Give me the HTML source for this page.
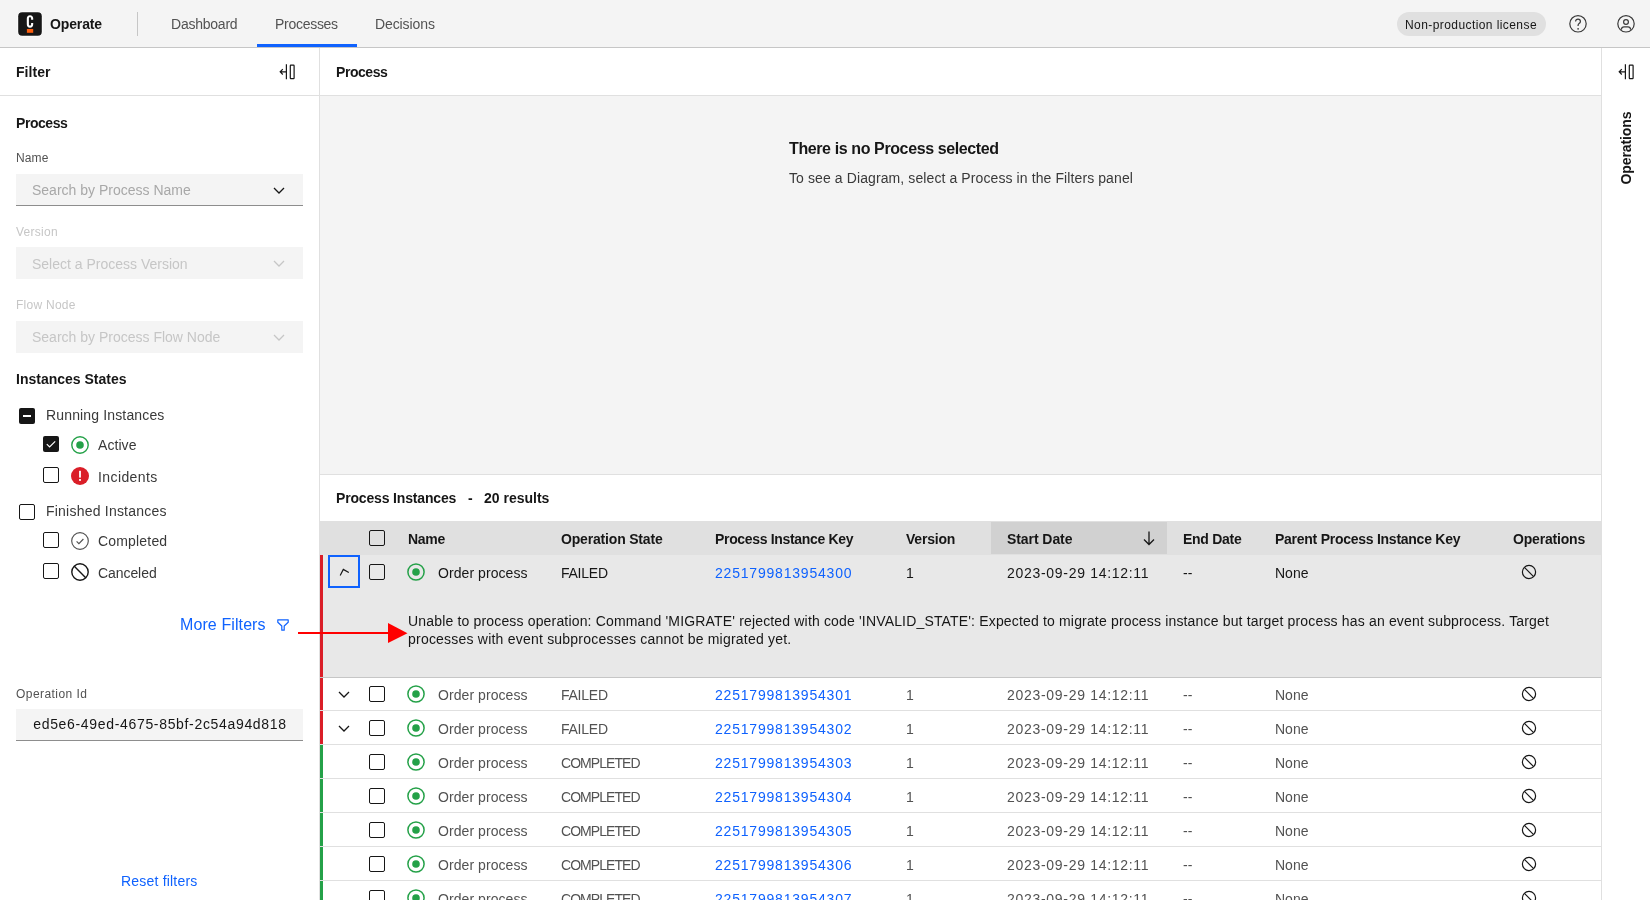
<!DOCTYPE html>
<html><head><meta charset="utf-8">
<style>
*{box-sizing:border-box;margin:0;padding:0}
html,body{width:1650px;height:900px;overflow:hidden;background:#fff;font-family:"Liberation Sans",sans-serif;color:#161616}
.a{position:absolute}
.t{position:absolute;white-space:nowrap;line-height:14px;font-size:14px;will-change:transform}
.s12{font-size:12px;line-height:12px}
.s16{font-size:16px;line-height:16px}
.b{font-weight:bold}
svg{position:absolute;overflow:visible}
</style></head><body>
<!-- HEADER -->
<div class="a" style="left:0;top:0;width:1650px;height:47px;background:#f4f4f4"></div>
<div class="a" style="left:0;top:47px;width:1650px;height:1px;background:#c6c6c6"></div>
<svg style="left:17px;top:11px" width="26" height="26" viewBox="0 0 26 26">
 <rect x="0.5" y="0.5" width="25" height="25" rx="5" fill="#fff"/>
 <rect x="1.2" y="1.2" width="23.6" height="23.6" rx="4" fill="#171717"/>
 <path d="M13 4.2c-2.1 0-3.2 1.3-3.2 3.4v5.7c0 2.1 1.1 3.4 3.2 3.4s3.2-1.3 3.2-3.4v-1.2h-2.1v1.2c0 .9-.3 1.3-1.1 1.3s-1.1-.4-1.1-1.3V7.6c0-.9.3-1.3 1.1-1.3s1.1.4 1.1 1.3v1.2h2.1V7.6c0-2.1-1.1-3.4-3.2-3.4z" fill="#fff"/>
 <rect x="9.9" y="18" width="6.3" height="3.8" fill="#fc5d0d"/>
</svg>
<div class="t b" style="left:50px;top:17px;color:#161616;letter-spacing:-0.13px">Operate</div>
<div class="a" style="left:137px;top:12px;width:1px;height:24px;background:#c6c6c6"></div>
<div class="t" style="left:171px;top:17px;color:#525252;letter-spacing:-0.23px">Dashboard</div>
<div class="t" style="left:275px;top:17px;color:#525252;letter-spacing:-0.28px">Processes</div>
<div class="t" style="left:375px;top:17px;color:#525252;letter-spacing:-0.1px">Decisions</div>
<div class="a" style="left:257px;top:44px;width:100px;height:3px;background:#0f62fe"></div>
<div class="a" style="left:1397px;top:12px;width:149px;height:24px;border-radius:12px;background:#e0e0e0"></div>
<div class="t s12" style="left:1405px;top:19px;color:#161616;letter-spacing:0.42px">Non-production license</div>
<svg style="left:1568px;top:14px" width="20" height="20" viewBox="0 0 20 20">
 <circle cx="10" cy="9.8" r="8.2" fill="none" stroke="#393939" stroke-width="1.2"/>
 <path d="M7.6 7.6c0-1.5 1-2.5 2.4-2.5s2.4 1 2.4 2.3c0 1.1-.6 1.6-1.3 2.1-.7.5-1 .9-1 1.8v.6" fill="none" stroke="#393939" stroke-width="1.2"/>
 <circle cx="10.1" cy="14.8" r="0.85" fill="#393939"/>
</svg>
<svg style="left:1616px;top:14px" width="20" height="20" viewBox="0 0 20 20">
 <circle cx="10" cy="9.8" r="8.2" fill="none" stroke="#393939" stroke-width="1.2"/>
 <circle cx="10" cy="8" r="2.4" fill="none" stroke="#393939" stroke-width="1.2"/>
 <path d="M5.3 15.6C5.6 13.7 6.4 12.9 8 12.9H12C13.6 12.9 14.4 13.7 14.7 15.6" fill="none" stroke="#393939" stroke-width="1.2"/>
</svg>

<!-- LEFT PANEL -->
<div class="a" style="left:319px;top:48px;width:1px;height:852px;background:#e0e0e0"></div>
<div class="a" style="left:0;top:95px;width:319px;height:1px;background:#e0e0e0"></div>
<div class="t b" style="left:16px;top:65px;letter-spacing:0.06px">Filter</div>
<svg style="left:279px;top:64px" width="17" height="16" viewBox="0 0 17 16">
 <path d="M1.2 7.8H7.4M3.8 5.1L1.2 7.8 3.8 10.5" fill="none" stroke="#161616" stroke-width="1.2"/>
 <path d="M7.4 0.3V15.3" stroke="#161616" stroke-width="1.2"/>
 <rect x="11.3" y="1.1" width="3.8" height="13.5" rx=".6" fill="none" stroke="#161616" stroke-width="1.2"/>
</svg>
<div class="t b" style="left:16px;top:116px;letter-spacing:-0.45px">Process</div>
<div class="t s12" style="left:16px;top:152px;color:#525252;letter-spacing:0.1px">Name</div>
<div class="a" style="left:16px;top:174px;width:287px;height:32px;background:#f4f4f4;border-bottom:1px solid #8d8d8d"></div>
<div class="t" style="left:32px;top:183px;color:#a8a8a8">Search by Process Name</div>
<svg style="left:271px;top:182px" width="16" height="16" viewBox="0 0 16 16"><path d="M3 6l5 5 5-5" fill="none" stroke="#161616" stroke-width="1.3"/></svg>
<div class="t s12" style="left:16px;top:226px;color:#c6c6c6;letter-spacing:0.27px">Version</div>
<div class="a" style="left:16px;top:247px;width:287px;height:32px;background:#f4f4f4"></div>
<div class="t" style="left:32px;top:257px;color:#c6c6c6">Select a Process Version</div>
<svg style="left:271px;top:255px" width="16" height="16" viewBox="0 0 16 16"><path d="M3 6l5 5 5-5" fill="none" stroke="#c6c6c6" stroke-width="1.3"/></svg>
<div class="t s12" style="left:16px;top:299px;color:#c6c6c6;letter-spacing:0.26px">Flow Node</div>
<div class="a" style="left:16px;top:321px;width:287px;height:32px;background:#f4f4f4"></div>
<div class="t" style="left:32px;top:330px;color:#c6c6c6">Search by Process Flow Node</div>
<svg style="left:271px;top:329px" width="16" height="16" viewBox="0 0 16 16"><path d="M3 6l5 5 5-5" fill="none" stroke="#c6c6c6" stroke-width="1.3"/></svg>

<div class="t b" style="left:16px;top:372px">Instances States</div>
<!-- checkboxes -->
<div class="a" style="left:19px;top:408px;width:16px;height:16px;border-radius:2px;background:#161616"></div>
<div class="a" style="left:23px;top:415px;width:8px;height:2px;background:#fff"></div>
<div class="t" style="left:46px;top:408px;color:#393939;letter-spacing:0.15px">Running Instances</div>

<div class="a" style="left:43px;top:436px;width:16px;height:16px;border-radius:2px;background:#161616"></div>
<svg style="left:43px;top:436px" width="16" height="16" viewBox="0 0 16 16"><path d="M3.8 8.2l2.8 2.8 5.6-5.6" fill="none" stroke="#fff" stroke-width="1.2"/></svg>
<svg style="left:71px;top:436px" width="18" height="18" viewBox="0 0 18 18"><circle cx="9" cy="9" r="8.2" fill="none" stroke="#24a148" stroke-width="1.4"/><circle cx="9" cy="9" r="3.8" fill="#24a148"/></svg>
<div class="t" style="left:98px;top:438px;color:#393939;letter-spacing:0.06px">Active</div>

<div class="a" style="left:43px;top:467px;width:16px;height:16px;border-radius:2px;border:1px solid #161616"></div>
<svg style="left:71px;top:467px" width="18" height="18" viewBox="0 0 18 18"><circle cx="9" cy="9" r="9" fill="#da1e28"/><rect x="8.1" y="3.8" width="1.8" height="6.8" fill="#fff"/><rect x="8.1" y="12" width="1.8" height="1.9" fill="#fff"/></svg>
<div class="t" style="left:98px;top:470px;color:#393939;letter-spacing:0.4px">Incidents</div>

<div class="a" style="left:19px;top:504px;width:16px;height:16px;border-radius:2px;border:1px solid #161616"></div>
<div class="t" style="left:46px;top:504px;color:#393939;letter-spacing:0.22px">Finished Instances</div>

<div class="a" style="left:43px;top:532px;width:16px;height:16px;border-radius:2px;border:1px solid #161616"></div>
<svg style="left:71px;top:532px" width="18" height="18" viewBox="0 0 18 18"><circle cx="9" cy="9" r="8.3" fill="none" stroke="#525252" stroke-width="1.15"/><path d="M5.6 9.3l2.3 2.3 4.5-4.6" fill="none" stroke="#525252" stroke-width="1.15"/></svg>
<div class="t" style="left:98px;top:534px;color:#393939;letter-spacing:0.18px">Completed</div>

<div class="a" style="left:43px;top:563px;width:16px;height:16px;border-radius:2px;border:1px solid #161616"></div>
<svg style="left:71px;top:563px" width="18" height="18" viewBox="0 0 18 18"><circle cx="9" cy="9" r="8.2" fill="none" stroke="#161616" stroke-width="1.4"/><path d="M3.3 3.3l11.4 11.4" stroke="#161616" stroke-width="1.4"/></svg>
<div class="t" style="left:98px;top:566px;color:#393939;letter-spacing:-0.07px">Canceled</div>

<div class="t s16" style="left:180px;top:617px;color:#0f62fe;letter-spacing:0.1px">More Filters</div>
<svg style="left:275px;top:617px" width="16" height="16" viewBox="0 0 16 16"><path d="M2.8 2.8H13.2V5.2L9.2 9V13.2H6.8V9L2.8 5.2Z" fill="none" stroke="#0f62fe" stroke-width="1.2" stroke-linejoin="round"/></svg>

<div class="t s12" style="left:16px;top:688px;color:#525252;letter-spacing:0.44px">Operation Id</div>
<div class="a" style="left:16px;top:709px;width:287px;height:32px;background:#f4f4f4;border-bottom:1px solid #8d8d8d;overflow:hidden">
 <div class="t" style="right:16px;top:8px;color:#161616;letter-spacing:0.67px">-b9ed5e6-49ed-4675-85bf-2c54a94d818</div>
 <div class="a" style="left:0;top:0;width:16px;height:31px;background:#f4f4f4"></div>
</div>
<div class="t" style="left:121px;top:874px;color:#0f62fe;letter-spacing:0.2px">Reset filters</div>

<!-- MAIN -->
<div class="t b" style="left:336px;top:65px;letter-spacing:-0.45px">Process</div>
<div class="a" style="left:320px;top:95px;width:1281px;height:1px;background:#e0e0e0"></div>
<div class="a" style="left:320px;top:96px;width:1281px;height:378px;background:#f4f4f4"></div>
<div class="a" style="left:320px;top:474px;width:1281px;height:1px;background:#e0e0e0"></div>
<div class="t s16 b" style="left:789px;top:141px;letter-spacing:-0.39px">There is no Process selected</div>
<div class="t" style="left:789px;top:171px;color:#393939;letter-spacing:0.1px">To see a Diagram, select a Process in the Filters panel</div>

<!-- RIGHT PANEL -->
<div class="a" style="left:1601px;top:48px;width:1px;height:852px;background:#e0e0e0"></div>
<svg style="left:1618px;top:64px" width="17" height="16" viewBox="0 0 17 16">
 <path d="M1.2 7.8H7.4M3.8 5.1L1.2 7.8 3.8 10.5" fill="none" stroke="#161616" stroke-width="1.2"/>
 <path d="M7.4 0.3V15.3" stroke="#161616" stroke-width="1.2"/>
 <rect x="11.3" y="1.1" width="3.8" height="13.5" rx=".6" fill="none" stroke="#161616" stroke-width="1.2"/>
</svg>
<div class="t b" style="left:1582px;top:141px;width:88px;text-align:center;transform:rotate(-90deg);letter-spacing:-0.1px">Operations</div>

<!-- TABLE -->
<div class="t b" style="left:336px;top:491px;letter-spacing:-0.16px">Process Instances</div>
<div class="t b" style="left:468px;top:491px">-</div>
<div class="t b" style="left:484px;top:491px">20 results</div>
<div class="a" style="left:320px;top:521px;width:1281px;height:34px;background:#e0e0e0"></div>
<div class="a" style="left:991px;top:522px;width:176px;height:32px;background:#d1d1d1"></div>
<div class="a" style="left:369px;top:530px;width:16px;height:16px;border-radius:2px;border:1px solid #161616"></div>
<div class="t b" style="left:408px;top:532px;letter-spacing:-0.28px">Name</div>
<div class="t b" style="left:561px;top:532px;letter-spacing:-0.18px">Operation State</div>
<div class="t b" style="left:715px;top:532px;letter-spacing:-0.33px">Process Instance Key</div>
<div class="t b" style="left:906px;top:532px;letter-spacing:-0.2px">Version</div>
<div class="t b" style="left:1007px;top:532px;letter-spacing:-0.07px">Start Date</div>
<div class="t b" style="left:1183px;top:532px;letter-spacing:-0.27px">End Date</div>
<div class="t b" style="left:1275px;top:532px;letter-spacing:-0.26px">Parent Process Instance Key</div>
<div class="t b" style="left:1513px;top:532px;letter-spacing:-0.19px">Operations</div>
<svg style="left:1141px;top:530px" width="16" height="16" viewBox="0 0 16 16"><path d="M8 1.5v13M3 9.5l5 5 5-5" fill="none" stroke="#161616" stroke-width="1.3"/></svg>
<div class="a" style="left:320px;top:555px;width:1281px;height:122px;background:#e8e8e8"></div>
<div class="a" style="left:320px;top:555px;width:3px;height:122px;background:#da1e28"></div>
<div class="a" style="left:328px;top:555px;width:32px;height:33px;border:2px solid #0f62fe"></div>
<svg style="left:336px;top:564px" width="16" height="16" viewBox="0 0 16 16"><path d="M4.2 11.4L7.3 5.4 12.8 8.6" fill="none" stroke="#161616" stroke-width="1.15"/></svg>
<div class="a" style="left:369px;top:564px;width:16px;height:16px;border-radius:2px;border:1px solid #161616"></div>
<svg style="left:407px;top:563px" width="18" height="18" viewBox="0 0 18 18"><circle cx="9" cy="9" r="8.1" fill="none" stroke="#24a148" stroke-width="1.5"/><circle cx="9" cy="9" r="3.8" fill="#24a148"/></svg>
<div class="t" style="left:438px;top:566px;color:#161616;letter-spacing:0.07px">Order process</div>
<div class="t" style="left:561px;top:566px;color:#161616;letter-spacing:-0.25px">FAILED</div>
<div class="t" style="left:715px;top:566px;color:#0f62fe;letter-spacing:0.8px">2251799813954300</div>
<div class="t" style="left:906px;top:566px;color:#161616">1</div>
<div class="t" style="left:1007px;top:566px;color:#161616;letter-spacing:0.7px">2023-09-29 14:12:11</div>
<div class="t" style="left:1183px;top:566px;color:#161616">--</div>
<div class="t" style="left:1275px;top:566px;color:#161616">None</div>
<svg style="left:1521px;top:564px" width="16" height="16" viewBox="0 0 16 16"><circle cx="8" cy="8" r="6.6" fill="none" stroke="#161616" stroke-width="1.2"/><path d="M3.4 3.4l9.2 9.2" stroke="#161616" stroke-width="1.2"/></svg>
<div class="t" style="left:408px;top:614px;color:#161616;letter-spacing:0.166px">Unable to process operation: Command 'MIGRATE' rejected with code 'INVALID_STATE': Expected to migrate process instance but target process has an event subprocess. Target</div>
<div class="t" style="left:408px;top:632px;color:#161616;letter-spacing:0.215px">processes with event subprocesses cannot be migrated yet.</div>
<div class="a" style="left:320px;top:677px;width:1281px;height:1px;background:#c6c6c6"></div>
<div class="a" style="left:320px;top:678px;width:3px;height:32px;background:#da1e28"></div>
<svg style="left:336px;top:686px" width="16" height="16" viewBox="0 0 16 16"><path d="M3 6l5 5 5-5" fill="none" stroke="#161616" stroke-width="1.3"/></svg>
<div class="a" style="left:369px;top:686px;width:16px;height:16px;border-radius:2px;border:1px solid #161616"></div>
<svg style="left:407px;top:685px" width="18" height="18" viewBox="0 0 18 18"><circle cx="9" cy="9" r="8.1" fill="none" stroke="#24a148" stroke-width="1.5"/><circle cx="9" cy="9" r="3.8" fill="#24a148"/></svg>
<div class="t" style="left:438px;top:688px;color:#525252;letter-spacing:0.07px">Order process</div>
<div class="t" style="left:561px;top:688px;color:#525252;letter-spacing:-0.25px">FAILED</div>
<div class="t" style="left:715px;top:688px;color:#0f62fe;letter-spacing:0.8px">2251799813954301</div>
<div class="t" style="left:906px;top:688px;color:#525252">1</div>
<div class="t" style="left:1007px;top:688px;color:#525252;letter-spacing:0.7px">2023-09-29 14:12:11</div>
<div class="t" style="left:1183px;top:688px;color:#525252">--</div>
<div class="t" style="left:1275px;top:688px;color:#525252">None</div>
<svg style="left:1521px;top:686px" width="16" height="16" viewBox="0 0 16 16"><circle cx="8" cy="8" r="6.6" fill="none" stroke="#161616" stroke-width="1.2"/><path d="M3.4 3.4l9.2 9.2" stroke="#161616" stroke-width="1.2"/></svg>
<div class="a" style="left:320px;top:710px;width:1281px;height:1px;background:#e0e0e0"></div>
<div class="a" style="left:320px;top:711px;width:3px;height:33px;background:#da1e28"></div>
<svg style="left:336px;top:720px" width="16" height="16" viewBox="0 0 16 16"><path d="M3 6l5 5 5-5" fill="none" stroke="#161616" stroke-width="1.3"/></svg>
<div class="a" style="left:369px;top:720px;width:16px;height:16px;border-radius:2px;border:1px solid #161616"></div>
<svg style="left:407px;top:719px" width="18" height="18" viewBox="0 0 18 18"><circle cx="9" cy="9" r="8.1" fill="none" stroke="#24a148" stroke-width="1.5"/><circle cx="9" cy="9" r="3.8" fill="#24a148"/></svg>
<div class="t" style="left:438px;top:722px;color:#525252;letter-spacing:0.07px">Order process</div>
<div class="t" style="left:561px;top:722px;color:#525252;letter-spacing:-0.25px">FAILED</div>
<div class="t" style="left:715px;top:722px;color:#0f62fe;letter-spacing:0.8px">2251799813954302</div>
<div class="t" style="left:906px;top:722px;color:#525252">1</div>
<div class="t" style="left:1007px;top:722px;color:#525252;letter-spacing:0.7px">2023-09-29 14:12:11</div>
<div class="t" style="left:1183px;top:722px;color:#525252">--</div>
<div class="t" style="left:1275px;top:722px;color:#525252">None</div>
<svg style="left:1521px;top:720px" width="16" height="16" viewBox="0 0 16 16"><circle cx="8" cy="8" r="6.6" fill="none" stroke="#161616" stroke-width="1.2"/><path d="M3.4 3.4l9.2 9.2" stroke="#161616" stroke-width="1.2"/></svg>
<div class="a" style="left:320px;top:744px;width:1281px;height:1px;background:#e0e0e0"></div>
<div class="a" style="left:320px;top:745px;width:3px;height:33px;background:#24a148"></div>
<div class="a" style="left:369px;top:754px;width:16px;height:16px;border-radius:2px;border:1px solid #161616"></div>
<svg style="left:407px;top:753px" width="18" height="18" viewBox="0 0 18 18"><circle cx="9" cy="9" r="8.1" fill="none" stroke="#24a148" stroke-width="1.5"/><circle cx="9" cy="9" r="3.8" fill="#24a148"/></svg>
<div class="t" style="left:438px;top:756px;color:#525252;letter-spacing:0.07px">Order process</div>
<div class="t" style="left:561px;top:756px;color:#525252;letter-spacing:-0.95px">COMPLETED</div>
<div class="t" style="left:715px;top:756px;color:#0f62fe;letter-spacing:0.8px">2251799813954303</div>
<div class="t" style="left:906px;top:756px;color:#525252">1</div>
<div class="t" style="left:1007px;top:756px;color:#525252;letter-spacing:0.7px">2023-09-29 14:12:11</div>
<div class="t" style="left:1183px;top:756px;color:#525252">--</div>
<div class="t" style="left:1275px;top:756px;color:#525252">None</div>
<svg style="left:1521px;top:754px" width="16" height="16" viewBox="0 0 16 16"><circle cx="8" cy="8" r="6.6" fill="none" stroke="#161616" stroke-width="1.2"/><path d="M3.4 3.4l9.2 9.2" stroke="#161616" stroke-width="1.2"/></svg>
<div class="a" style="left:320px;top:778px;width:1281px;height:1px;background:#e0e0e0"></div>
<div class="a" style="left:320px;top:779px;width:3px;height:33px;background:#24a148"></div>
<div class="a" style="left:369px;top:788px;width:16px;height:16px;border-radius:2px;border:1px solid #161616"></div>
<svg style="left:407px;top:787px" width="18" height="18" viewBox="0 0 18 18"><circle cx="9" cy="9" r="8.1" fill="none" stroke="#24a148" stroke-width="1.5"/><circle cx="9" cy="9" r="3.8" fill="#24a148"/></svg>
<div class="t" style="left:438px;top:790px;color:#525252;letter-spacing:0.07px">Order process</div>
<div class="t" style="left:561px;top:790px;color:#525252;letter-spacing:-0.95px">COMPLETED</div>
<div class="t" style="left:715px;top:790px;color:#0f62fe;letter-spacing:0.8px">2251799813954304</div>
<div class="t" style="left:906px;top:790px;color:#525252">1</div>
<div class="t" style="left:1007px;top:790px;color:#525252;letter-spacing:0.7px">2023-09-29 14:12:11</div>
<div class="t" style="left:1183px;top:790px;color:#525252">--</div>
<div class="t" style="left:1275px;top:790px;color:#525252">None</div>
<svg style="left:1521px;top:788px" width="16" height="16" viewBox="0 0 16 16"><circle cx="8" cy="8" r="6.6" fill="none" stroke="#161616" stroke-width="1.2"/><path d="M3.4 3.4l9.2 9.2" stroke="#161616" stroke-width="1.2"/></svg>
<div class="a" style="left:320px;top:812px;width:1281px;height:1px;background:#e0e0e0"></div>
<div class="a" style="left:320px;top:813px;width:3px;height:33px;background:#24a148"></div>
<div class="a" style="left:369px;top:822px;width:16px;height:16px;border-radius:2px;border:1px solid #161616"></div>
<svg style="left:407px;top:821px" width="18" height="18" viewBox="0 0 18 18"><circle cx="9" cy="9" r="8.1" fill="none" stroke="#24a148" stroke-width="1.5"/><circle cx="9" cy="9" r="3.8" fill="#24a148"/></svg>
<div class="t" style="left:438px;top:824px;color:#525252;letter-spacing:0.07px">Order process</div>
<div class="t" style="left:561px;top:824px;color:#525252;letter-spacing:-0.95px">COMPLETED</div>
<div class="t" style="left:715px;top:824px;color:#0f62fe;letter-spacing:0.8px">2251799813954305</div>
<div class="t" style="left:906px;top:824px;color:#525252">1</div>
<div class="t" style="left:1007px;top:824px;color:#525252;letter-spacing:0.7px">2023-09-29 14:12:11</div>
<div class="t" style="left:1183px;top:824px;color:#525252">--</div>
<div class="t" style="left:1275px;top:824px;color:#525252">None</div>
<svg style="left:1521px;top:822px" width="16" height="16" viewBox="0 0 16 16"><circle cx="8" cy="8" r="6.6" fill="none" stroke="#161616" stroke-width="1.2"/><path d="M3.4 3.4l9.2 9.2" stroke="#161616" stroke-width="1.2"/></svg>
<div class="a" style="left:320px;top:846px;width:1281px;height:1px;background:#e0e0e0"></div>
<div class="a" style="left:320px;top:847px;width:3px;height:33px;background:#24a148"></div>
<div class="a" style="left:369px;top:856px;width:16px;height:16px;border-radius:2px;border:1px solid #161616"></div>
<svg style="left:407px;top:855px" width="18" height="18" viewBox="0 0 18 18"><circle cx="9" cy="9" r="8.1" fill="none" stroke="#24a148" stroke-width="1.5"/><circle cx="9" cy="9" r="3.8" fill="#24a148"/></svg>
<div class="t" style="left:438px;top:858px;color:#525252;letter-spacing:0.07px">Order process</div>
<div class="t" style="left:561px;top:858px;color:#525252;letter-spacing:-0.95px">COMPLETED</div>
<div class="t" style="left:715px;top:858px;color:#0f62fe;letter-spacing:0.8px">2251799813954306</div>
<div class="t" style="left:906px;top:858px;color:#525252">1</div>
<div class="t" style="left:1007px;top:858px;color:#525252;letter-spacing:0.7px">2023-09-29 14:12:11</div>
<div class="t" style="left:1183px;top:858px;color:#525252">--</div>
<div class="t" style="left:1275px;top:858px;color:#525252">None</div>
<svg style="left:1521px;top:856px" width="16" height="16" viewBox="0 0 16 16"><circle cx="8" cy="8" r="6.6" fill="none" stroke="#161616" stroke-width="1.2"/><path d="M3.4 3.4l9.2 9.2" stroke="#161616" stroke-width="1.2"/></svg>
<div class="a" style="left:320px;top:880px;width:1281px;height:1px;background:#e0e0e0"></div>
<div class="a" style="left:320px;top:881px;width:3px;height:33px;background:#24a148"></div>
<div class="a" style="left:369px;top:890px;width:16px;height:16px;border-radius:2px;border:1px solid #161616"></div>
<svg style="left:407px;top:889px" width="18" height="18" viewBox="0 0 18 18"><circle cx="9" cy="9" r="8.1" fill="none" stroke="#24a148" stroke-width="1.5"/><circle cx="9" cy="9" r="3.8" fill="#24a148"/></svg>
<div class="t" style="left:438px;top:892px;color:#525252;letter-spacing:0.07px">Order process</div>
<div class="t" style="left:561px;top:892px;color:#525252;letter-spacing:-0.95px">COMPLETED</div>
<div class="t" style="left:715px;top:892px;color:#0f62fe;letter-spacing:0.8px">2251799813954307</div>
<div class="t" style="left:906px;top:892px;color:#525252">1</div>
<div class="t" style="left:1007px;top:892px;color:#525252;letter-spacing:0.7px">2023-09-29 14:12:11</div>
<div class="t" style="left:1183px;top:892px;color:#525252">--</div>
<div class="t" style="left:1275px;top:892px;color:#525252">None</div>
<svg style="left:1521px;top:890px" width="16" height="16" viewBox="0 0 16 16"><circle cx="8" cy="8" r="6.6" fill="none" stroke="#161616" stroke-width="1.2"/><path d="M3.4 3.4l9.2 9.2" stroke="#161616" stroke-width="1.2"/></svg>
<div class="a" style="left:320px;top:914px;width:1281px;height:1px;background:#e0e0e0"></div>
<svg style="left:0;top:0" width="1650" height="900"><path d="M298 633H390" stroke="#ff0000" stroke-width="2"/><path d="M388 623L407.5 633.2 388 643z" fill="#ff0000"/></svg>
</body></html>
